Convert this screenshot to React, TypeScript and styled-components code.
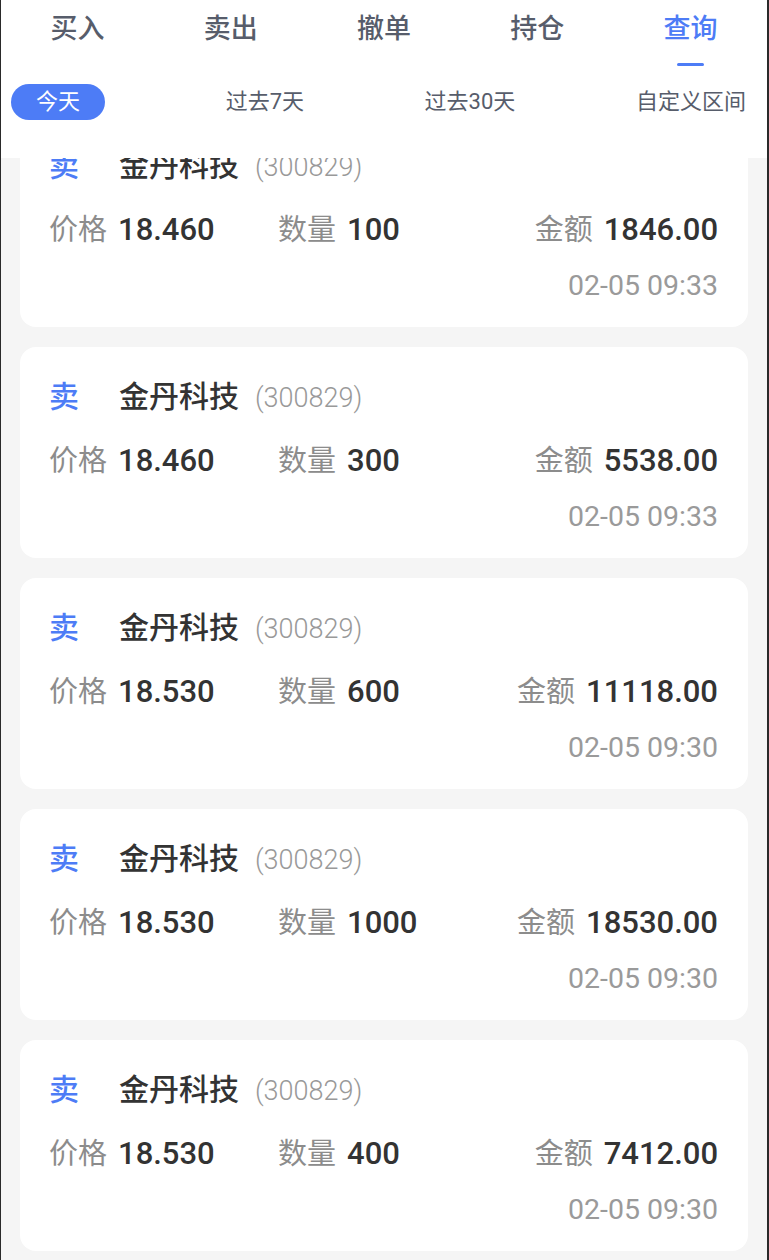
import styled, { createGlobalStyle } from "styled-components";

const GlobalStyle = createGlobalStyle`
    html, body {
        margin: 0;
        padding: 0;
        background: #f5f5f5;
    }
    * {
        box-sizing: border-box;
    }
`

const BLUE = '#4d7cf6';

const Screen = styled.div`
    width: 769px;
    height: 1260px;
    display: flex;
    flex-direction: column;
    background-color: #f5f5f5;
    border-left: 1px solid #2a2a2a;
    border-right: 2px solid #2a2a2a;
    overflow: hidden;
    font-family: Roboto, "Noto Sans CJK SC", sans-serif;
`

const Header = styled.header`
    flex: none;
    height: 158px;
    background-color: #ffffff;
    display: flex;
    flex-direction: column;
`

const Tabs = styled.nav`
    display: grid;
    grid-template-columns: repeat(5, 1fr);
    height: 72px;
`

interface Active {
    active: boolean
}

const Tab = styled.div<Active>`
    display: flex;
    flex-direction: column;
    align-items: center;
    padding-top: 10px;
    font-size: 27px;
    line-height: 38px;
    font-weight: 500;
    color: ${({ active }) => active ? BLUE : '#575d6b'};
    &::after {
        content: '';
        margin-top: 15px;
        width: 27px;
        height: 3px;
        border-radius: 2px;
        background-color: ${({ active }) => active ? BLUE : 'transparent'};
    }
`

const Filters = styled.div`
    display: flex;
    justify-content: space-between;
    align-items: center;
    margin-top: 12px;
    padding: 0 21px 0 10px;
    height: 36px;
`

const Filter = styled.div<Active>`
    height: 36px;
    line-height: 36px;
    font-size: 22px;
    color: ${({ active }) => active ? '#ffffff' : '#575d6b'};
    background-color: ${({ active }) => active ? BLUE : 'transparent'};
    border-radius: 18px;
    padding: 0 ${({ active }) => active ? '25px' : '0'};
`

const List = styled.main`
    flex: 1;
    overflow: hidden;
`

const Track = styled.div`
    margin-top: -42px;
    padding: 0 19px;
    display: flex;
    flex-direction: column;
    gap: 20px;
`

const Card = styled.section`
    height: 211px;
    background-color: #ffffff;
    border-radius: 16px;
    padding: 30px 30px 0 29px;
    display: flex;
    flex-direction: column;
`

const TitleRow = styled.div`
    display: flex;
    align-items: baseline;
    height: 40px;
    line-height: 40px;
`

const Side = styled.span`
    font-size: 30px;
    font-weight: 500;
    color: ${BLUE};
    margin-right: 40px;
`

const Name = styled.span`
    font-size: 30px;
    font-weight: 500;
    color: #333333;
    margin-right: 16px;
`

const Code = styled.span`
    font-size: 27px;
    font-weight: 300;
    color: #999999;
`

const ValueRow = styled.div`
    display: grid;
    grid-template-columns: 229px 1fr auto;
    margin-top: 24px;
    height: 40px;
    line-height: 40px;
`

const Field = styled.div`
    display: flex;
    align-items: baseline;
    gap: 11px;
    white-space: nowrap;
`

const Label = styled.span`
    font-size: 29px;
    color: #8c8c8c;
`

const Value = styled.span`
    font-size: 31px;
    font-weight: 500;
    color: #333333;
`

const Time = styled.div`
    margin-top: 18px;
    height: 36px;
    line-height: 36px;
    font-size: 28.5px;
    color: #9a9a9a;
    text-align: right;
`

const tabs = ['买入', '卖出', '撤单', '持仓', '查询'];
const filters = ['今天', '过去7天', '过去30天', '自定义区间'];

const orders = [
    { price: '18.460', qty: '100', amount: '1846.00', time: '02-05 09:33' },
    { price: '18.460', qty: '300', amount: '5538.00', time: '02-05 09:33' },
    { price: '18.530', qty: '600', amount: '11118.00', time: '02-05 09:30' },
    { price: '18.530', qty: '1000', amount: '18530.00', time: '02-05 09:30' },
    { price: '18.530', qty: '400', amount: '7412.00', time: '02-05 09:30' },
];

const App = () => {
    return (
        <>
            <GlobalStyle />
            <Screen>
                <Header>
                    <Tabs>
                        {tabs.map((tab) => (
                            <Tab key={tab} active={tab === '查询'}>{tab}</Tab>
                        ))}
                    </Tabs>
                    <Filters>
                        {filters.map((f) => (
                            <Filter key={f} active={f === '今天'}>{f}</Filter>
                        ))}
                    </Filters>
                </Header>
                <List>
                    <Track>
                        {orders.map((order, i) => (
                            <Card key={i}>
                                <TitleRow>
                                    <Side>卖</Side>
                                    <Name>金丹科技</Name>
                                    <Code>(300829)</Code>
                                </TitleRow>
                                <ValueRow>
                                    <Field>
                                        <Label>价格</Label>
                                        <Value>{order.price}</Value>
                                    </Field>
                                    <Field>
                                        <Label>数量</Label>
                                        <Value>{order.qty}</Value>
                                    </Field>
                                    <Field>
                                        <Label>金额</Label>
                                        <Value>{order.amount}</Value>
                                    </Field>
                                </ValueRow>
                                <Time>{order.time}</Time>
                            </Card>
                        ))}
                    </Track>
                </List>
            </Screen>
        </>
    )
}

export default App;
